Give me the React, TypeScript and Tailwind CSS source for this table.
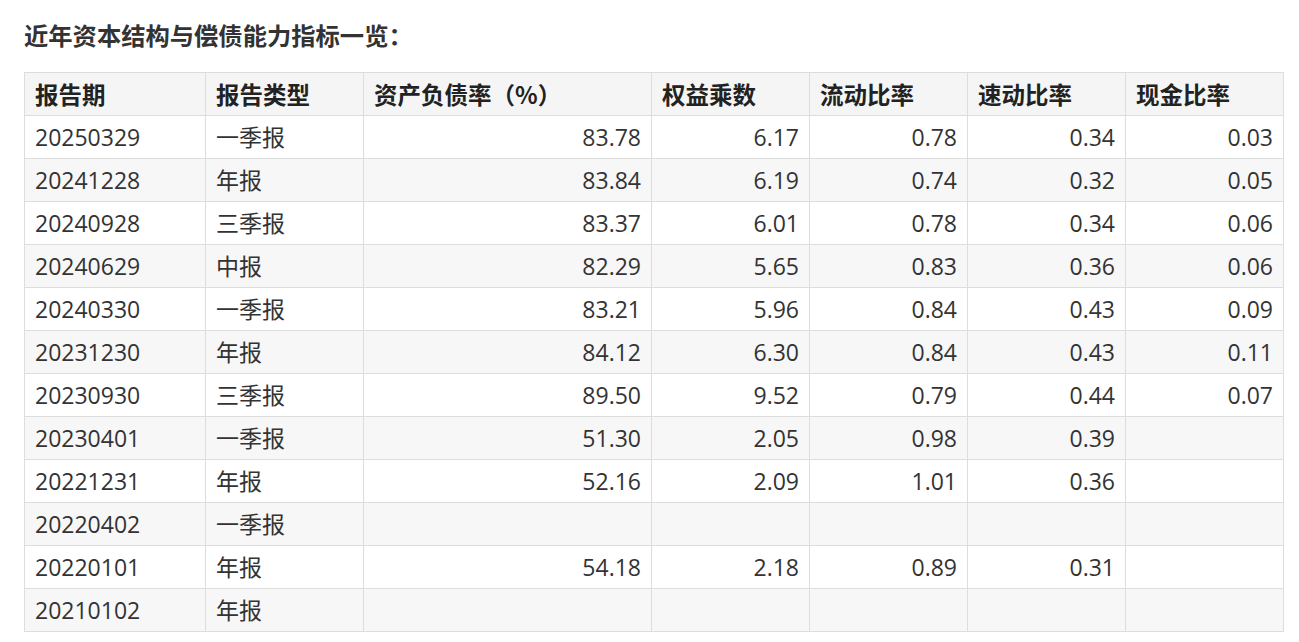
import React from "react";

const rows: [string, string, string, string, string, string, string][] = [
  ["20250329", "一季报", "83.78", "6.17", "0.78", "0.34", "0.03"],
  ["20241228", "年报", "83.84", "6.19", "0.74", "0.32", "0.05"],
  ["20240928", "三季报", "83.37", "6.01", "0.78", "0.34", "0.06"],
  ["20240629", "中报", "82.29", "5.65", "0.83", "0.36", "0.06"],
  ["20240330", "一季报", "83.21", "5.96", "0.84", "0.43", "0.09"],
  ["20231230", "年报", "84.12", "6.30", "0.84", "0.43", "0.11"],
  ["20230930", "三季报", "89.50", "9.52", "0.79", "0.44", "0.07"],
  ["20230401", "一季报", "51.30", "2.05", "0.98", "0.39", ""],
  ["20221231", "年报", "52.16", "2.09", "1.01", "0.36", ""],
  ["20220402", "一季报", "", "", "", "", ""],
  ["20220101", "年报", "54.18", "2.18", "0.89", "0.31", ""],
  ["20210102", "年报", "", "", "", "", ""],
];

const headers = ["报告期", "报告类型", "资产负债率（%）", "权益乘数", "流动比率", "速动比率", "现金比率"];
const colClasses = ["w-[181px]", "w-[158px]", "w-[288px]", "w-[158px]", "w-[158px]", "w-[158px]", "w-[158px]"];

export default function App() {
  return (
    <div className="w-[1299px] h-[642px] bg-white text-[#333] pl-[24px] pt-[19px] overflow-hidden font-['Open_Sans','Noto_Sans_CJK_SC',sans-serif]">
      <h2 className="m-0 text-[24.3px] font-bold leading-[32px] text-[#333] font-['Noto_Sans_CJK_SC',sans-serif]">
        近年资本结构与偿债能力指标一览：
      </h2>
      <table className="mt-[21px] w-[1259px] table-fixed border-collapse text-[23px]">
        <colgroup>
          {colClasses.map((c, i) => (
            <col key={i} className={c} />
          ))}
        </colgroup>
        <thead>
          <tr className="bg-[#f5f5f5]">
            {headers.map((h, i) => (
              <th
                key={i}
                className="border border-[#dddddd] px-[10px] py-[7px] leading-[28px] text-left text-[23.5px] font-bold text-[#222] font-['Noto_Sans_CJK_SC',sans-serif]"
              >
                {h}
              </th>
            ))}
          </tr>
        </thead>
        <tbody>
          {rows.map((r, ri) => (
            <tr key={ri} className={ri % 2 === 1 ? "bg-[#f7f7f7]" : "bg-white"}>
              {r.map((c, ci) => (
                <td
                  key={ci}
                  className={
                    ci >= 2
                      ? "border border-[#dddddd] px-[10px] py-[7px] leading-[28px] whitespace-nowrap text-right"
                      : "border border-[#dddddd] px-[10px] py-[7px] leading-[28px] whitespace-nowrap text-left"
                  }
                >
                  {c}
                </td>
              ))}
            </tr>
          ))}
        </tbody>
      </table>
    </div>
  );
}
